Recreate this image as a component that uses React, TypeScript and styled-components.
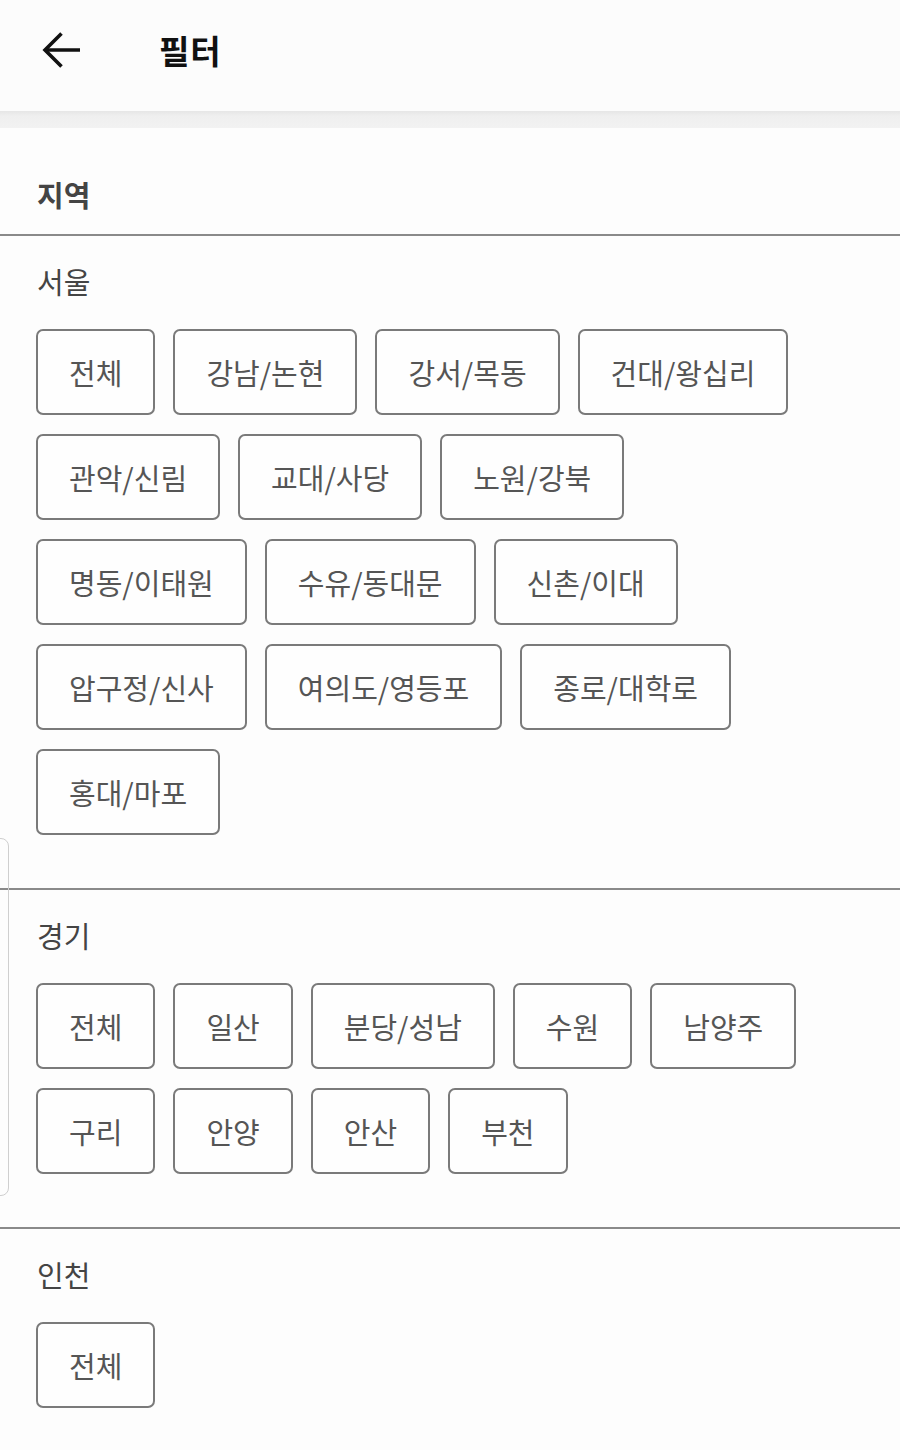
import React from 'react';
import styled, { createGlobalStyle } from 'styled-components';

const GlobalStyle = createGlobalStyle`
  html, body {
    margin: 0;
    padding: 0;
    background: #fdfdfd;
  }
  body {
    font-family: "Noto Sans CJK KR", "Noto Sans", sans-serif;
  }
`;

const regions: { name: string; areas: string[] }[] = [
  {
    name: '서울',
    areas: [
      '전체',
      '강남/논현',
      '강서/목동',
      '건대/왕십리',
      '관악/신림',
      '교대/사당',
      '노원/강북',
      '명동/이태원',
      '수유/동대문',
      '신촌/이대',
      '압구정/신사',
      '여의도/영등포',
      '종로/대학로',
      '홍대/마포',
    ],
  },
  {
    name: '경기',
    areas: ['전체', '일산', '분당/성남', '수원', '남양주', '구리', '안양', '안산', '부천'],
  },
  {
    name: '인천',
    areas: ['전체'],
  },
];

function BackArrow() {
  return (
    <svg width="40" height="40" viewBox="0 0 40 40" fill="none">
      <path d="M39 20H5" stroke="#111" strokeWidth="3.6" />
      <path d="M20.5 3.5L4 20L20.5 36.5" stroke="#111" strokeWidth="3.6" />
    </svg>
  );
}

export default function App() {
  return (
    <Page>
      <GlobalStyle />
      <Header>
        <BackButton>
          <BackArrow />
        </BackButton>
        <Title>필터</Title>
      </Header>
      <Shade />
      <SectionHead>지역</SectionHead>
      {regions.map((r, i) => (
        <Region key={r.name} last={i === regions.length - 1}>
          <RegionLabel>{r.name}</RegionLabel>
          <Chips>
            {r.areas.map((a) => (
              <Chip key={a}>{a}</Chip>
            ))}
          </Chips>
        </Region>
      ))}
      <SideHandle />
    </Page>
  );
}

const Page = styled.div`
  position: relative;
  width: 900px;
  min-height: 1450px;
  background: #fdfdfd;
  overflow: hidden;
`;

const Header = styled.div`
  height: 111px;
  display: flex;
  align-items: center;
  padding-left: 41px;
  box-sizing: border-box;
  background: #fcfcfc;
`;

const BackButton = styled.div`
  width: 40px;
  height: 40px;
  display: flex;
  margin-top: -12px;
`;

const Title = styled.h1`
  margin: -12px 0 0 78px;
  font-size: 33px;
  font-weight: 700;
  color: #111;
  letter-spacing: 1px;
`;

const Shade = styled.div`
  height: 17px;
  background: linear-gradient(#e6e6e6, #efefef 30%, #f2f2f2);
`;

const SectionHead = styled.div`
  height: 108px;
  box-sizing: border-box;
  padding: 46px 37px 0;
  font-size: 29px;
  line-height: 40px;
  font-weight: 700;
  color: #444;
  border-bottom: 2px solid #8a8a8a;
`;

const Region = styled.section<{ last?: boolean }>`
  padding: 25px 70px ${(p) => (p.last ? '40px' : '53px')} 36px;
  border-bottom: ${(p) => (p.last ? 'none' : '2px solid #8a8a8a')};
`;

const RegionLabel = styled.div`
  font-size: 29px;
  line-height: 40px;
  color: #444;
  padding-left: 1px;
  margin-bottom: 28px;
`;

const Chips = styled.div`
  display: flex;
  flex-wrap: wrap;
  gap: 19px 18px;
`;

const Chip = styled.button`
  height: 86px;
  box-sizing: border-box;
  padding: 0 31px;
  display: flex;
  align-items: center;
  justify-content: center;
  border: 2px solid #7a7a7a;
  border-radius: 7px;
  background: #fefefe;
  font-family: "Noto Sans CJK KR", "Noto Sans", sans-serif;
  font-size: 29px;
  color: #555;
  white-space: nowrap;
`;

const SideHandle = styled.div`
  position: absolute;
  left: -10px;
  top: 838px;
  width: 17px;
  height: 356px;
  border: 1.5px solid #cfcfcf;
  border-radius: 8px;
  pointer-events: none;
`;
